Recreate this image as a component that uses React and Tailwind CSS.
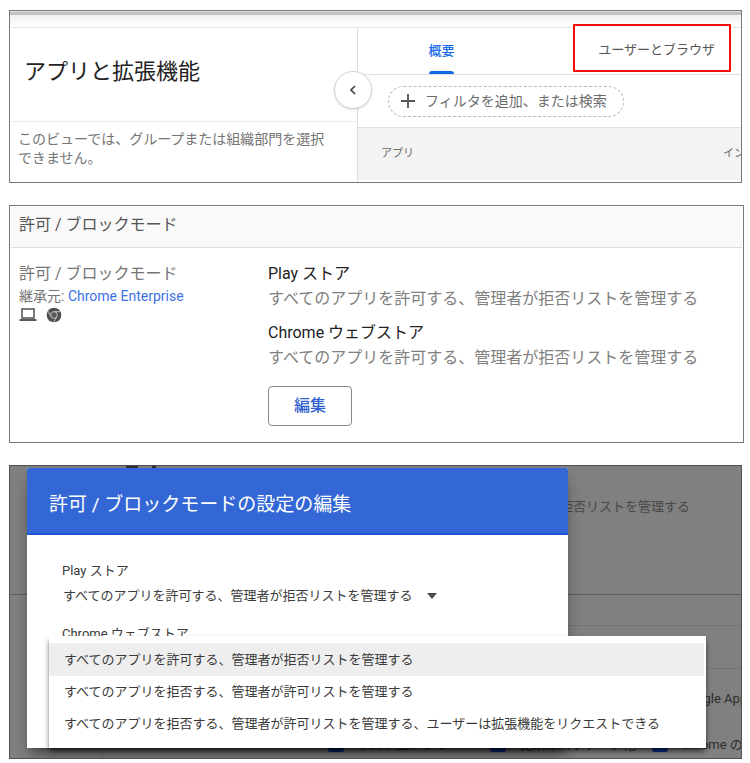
import React from "react";

const ALLOW_ALL = "すべてのアプリを許可する、管理者が拒否リストを管理する";
const BLOCK_ALL = "すべてのアプリを拒否する、管理者が許可リストを管理する";
const BLOCK_ALL_REQUEST =
  "すべてのアプリを拒否する、管理者が許可リストを管理する、ユーザーは拡張機能をリクエストできる";

function LaptopIcon() {
  return (
    <svg width="18" height="14" viewBox="0 0 18 14" fill="none" aria-hidden="true">
      <rect x="3" y="1" width="12" height="9" stroke="#5a5a5a" strokeWidth="1.6" />
      <path d="M0.5 12h17" stroke="#5a5a5a" strokeWidth="2" />
    </svg>
  );
}

function ChromeIcon() {
  return (
    <svg width="16" height="16" viewBox="0 0 24 24" aria-hidden="true">
      <circle cx="12" cy="12" r="11" fill="#4f4f4f" />
      <g stroke="#c4c4c4" strokeWidth="1.5" fill="none">
        <path d="M12 7h9.6" />
        <path d="M7.7 14.5L2.9 6.2" />
        <path d="M16.3 14.5l-4.8 8.3" />
        <circle cx="12" cy="12" r="5" />
      </g>
      <circle cx="12" cy="12" r="3" fill="#5a5a5a" />
    </svg>
  );
}

function AppsPanel() {
  return (
    <section className="relative mr-px h-[173px] overflow-hidden border border-[#77777d] bg-white">
      <div className="h-1 border-t border-[#dddddd] bg-[#c2c2c2]" />
      <div className="h-3 bg-linear-to-b from-[#f0f0f0] to-white" />
      <div className="ml-[2px] flex h-[155px] border-t border-[#e4e4e4]">
        <div className="relative flex w-[346px] shrink-0 flex-col border-r border-[#dedede]">
          <h1 className="flex h-[94px] items-center border-b border-[#ebebeb] pb-[6px] pl-3 text-[22px] text-[#222222]">
            アプリと拡張機能
          </h1>
          <p className="w-[322px] pt-2 pl-[6px] text-[14px] leading-[19px] text-[#757575]">
            このビューでは、グループまたは組織部門を選択できません。
          </p>
          <button
            aria-label="折りたたむ"
            className="absolute top-[43px] -right-[15px] z-10 flex size-[38px] items-center justify-center rounded-full border border-[#d4d4d4] bg-white shadow"
          >
            <svg width="8" height="10" viewBox="0 0 8 10" fill="none" aria-hidden="true">
              <path d="M6 1L2 5l4 4" stroke="#444444" strokeWidth="1.7" />
            </svg>
          </button>
        </div>
        <div className="flex min-w-0 flex-1 flex-col">
          <nav className="flex h-[47px] shrink-0 border-b border-[#dfdfdf]">
            <div className="flex flex-1 justify-center pr-12">
              <a href="#overview" className="flex flex-col justify-between text-[13px] font-medium text-[#1a6be8]">
                <span className="pt-[13px] leading-5">概要</span>
                <span className="mx-px h-[3px] rounded-t bg-[#1266e8]" />
              </a>
            </div>
            <a
              href="#users"
              className="relative z-10 -mt-1 mr-[10px] flex h-12 w-[158px] items-center justify-end border-2 border-[#f80d0d] bg-white pt-1 pr-[14px] text-[13px] text-[#555555]"
            >
              ユーザーとブラウザ
            </a>
          </nav>
          <div className="flex h-[53px] shrink-0 items-center border-b border-[#dfdfdf] pl-[30px]">
            <button className="flex h-[31px] w-[236px] items-center gap-[10px] rounded-full border border-dashed border-[#b9b9b9] pl-3 text-[14px] text-[#6d6d6d]">
              <svg width="14" height="14" viewBox="0 0 14 14" aria-hidden="true">
                <path d="M7 0v14M0 7h14" stroke="#555555" strokeWidth="1.8" />
              </svg>
              フィルタを追加、または検索
            </button>
          </div>
          <div className="flex h-[52px] items-center justify-between bg-[#f3f3f3] pl-[23px] text-[11px] text-[#6a6a6a]">
            <span>アプリ</span>
            <span className="w-[18px] overflow-hidden whitespace-nowrap">イン</span>
          </div>
        </div>
      </div>
    </section>
  );
}

function ModePanel() {
  return (
    <section className="-mr-px h-[238px] border border-[#77777d] bg-white p-px">
      <h2 className="flex h-[41px] items-center border-b border-[#dddddd] bg-[#f9f9f9] pb-[5px] pl-2 text-[16px] text-[#555555]">
        許可 / ブロックモード
      </h2>
      <div className="flex pt-[13px] pl-2">
        <div className="w-[249px] shrink-0">
          <h3 className="text-[16px] leading-[25px] text-[#757575]">許可 / ブロックモード</h3>
          <p className="text-[14px] leading-5 text-[#757575]">
            継承元:{" "}
            <a href="#enterprise" className="text-[#3b71e8]">
              Chrome Enterprise
            </a>
          </p>
          <div className="flex items-center gap-[9px] pt-px">
            <LaptopIcon />
            <ChromeIcon />
          </div>
        </div>
        <div>
          <h3 className="text-[16px] leading-[25px] text-[#222222]">Play ストア</h3>
          <p className="text-[16px] leading-[25px] text-[#808080]">{ALLOW_ALL}</p>
          <h3 className="pt-[9px] text-[16px] leading-[25px] text-[#222222]">Chrome ウェブストア</h3>
          <p className="text-[16px] leading-[25px] text-[#808080]">{ALLOW_ALL}</p>
          <button className="mt-4 h-10 w-[84px] rounded border border-[#888888] bg-white text-[16px] font-medium text-[#2f5fd0]">
            編集
          </button>
        </div>
      </div>
    </section>
  );
}

function BackdropItem({ label }) {
  return (
    <label className="flex w-[162px] shrink-0 items-center gap-[13px] whitespace-nowrap">
      <input type="checkbox" className="size-4 shrink-0 appearance-none rounded-xs bg-[#0b2f86]" />
      {label}
    </label>
  );
}

function Backdrop() {
  return (
    <div className="flex h-full flex-col text-[13px] text-[#2e2e2e]">
      <div className="flex h-[2px] gap-[14px] pl-[116px]">
        <span className="w-3 bg-[#2e2e2e]" />
        <span className="w-1 bg-[#2e2e2e]" />
      </div>
      <div className="flex h-[127px] items-start justify-end border-b border-[#5e5e5e] pt-[29px] pr-[51px] text-[#484848]">
        拒否リストを管理する
      </div>
      <div className="ml-[92px] h-[31px] border-b border-l border-[#747474]" />
      <div className="ml-[92px] h-[43px] border-b border-l border-[#747474]" />
      <div className="ml-[92px] flex-1 overflow-hidden border-l border-[#747474]">
        <div className="flex justify-end pt-5 whitespace-nowrap">
          <span className="w-[45px] overflow-hidden">ogle Apps</span>
        </div>
        <div className="flex pt-[26px] pl-[225px]">
          <BackdropItem label="ホスト型アプリ" />
          <BackdropItem label="従来のパッケージ化" />
          <BackdropItem label="Chrome の" />
        </div>
      </div>
    </div>
  );
}

function EditDialog() {
  return (
    <div
      role="dialog"
      aria-labelledby="dialog-title"
      className="absolute top-[2px] bottom-[10px] left-[17px] w-[541px] rounded-t-xs bg-white shadow-lg shadow-black/40"
    >
      <h2
        id="dialog-title"
        className="flex h-[67px] items-center rounded-t-xs border-b-2 border-[#1c54d4] bg-[#3367d6] pt-[10px] pl-[22px] text-[19px] text-white"
      >
        許可 / ブロックモードの設定の編集
      </h2>
      <div className="pt-[26px] pl-[35px] text-[13px] text-[#3c3c3c]">
        <label htmlFor="play-mode" className="block leading-5">
          Play ストア
        </label>
        <div className="flex items-center pt-[5px]">
          <select
            id="play-mode"
            className="h-5 appearance-none bg-transparent pl-px leading-5 outline-none"
            defaultValue="allow"
          >
            <option value="allow">{ALLOW_ALL}</option>
          </select>
          <svg className="ml-3" width="10" height="6" viewBox="0 0 10 6" aria-hidden="true">
            <path d="M0 0h10L5 6z" fill="#4a4a4a" />
          </svg>
        </div>
        <p className="pt-[18px] leading-5">Chrome ウェブストア</p>
      </div>
    </div>
  );
}

function ModeMenu() {
  return (
    <div
      role="listbox"
      aria-label="Chrome ウェブストア"
      className="absolute top-[170px] bottom-[10px] left-[39px] flex w-[657px] flex-col bg-white pt-[7px] pr-[2px] text-[13px] text-[#3a3a3a] shadow-md shadow-black/60"
    >
      <button role="option" aria-selected="true" className="h-[33px] bg-[#eeeeee] pl-[15px] text-left">
        {ALLOW_ALL}
      </button>
      <button role="option" aria-selected="false" className="h-8 pl-[15px] text-left">
        {BLOCK_ALL}
      </button>
      <button role="option" aria-selected="false" className="h-8 pl-[15px] text-left">
        {BLOCK_ALL_REQUEST}
      </button>
    </div>
  );
}

export default function App() {
  return (
    <main
      lang="ja"
      className="flex flex-col bg-white pt-[10px] pr-[7px] pl-[9px] font-[Roboto,'Noto_Sans_CJK_JP',sans-serif]"
    >
      <AppsPanel />
      <div className="pt-[22px]">
        <ModePanel />
      </div>
      <div className="pt-[22px]">
        <section className="relative mr-px h-[294px] overflow-hidden border border-[#4f5252] bg-[#808080]">
          <Backdrop />
          <EditDialog />
          <ModeMenu />
        </section>
      </div>
    </main>
  );
}
